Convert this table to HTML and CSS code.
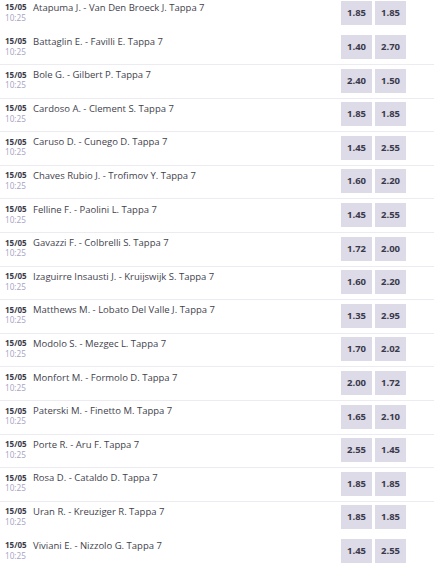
FILE: index.html
```html
<!DOCTYPE html>
<html lang="it">

<head>
    <meta charset="UTF-8">
    <meta name="viewport" content="width=device-width, initial-scale=1.0">
    <title>Tappa 7 - Testa a testa</title>
    <link rel="stylesheet" href="styles.css">
</head>

<body>
    <div class="list">
        <div class="row plain">
            <div class="when"><b>15/05</b><span>10:25</span></div>
            <div class="event">Atapuma J. - Van Den Broeck J. Tappa 7</div>
            <div class="odds"><span>1.85</span><span>1.85</span></div>
        </div>
        <div class="row">
            <div class="when"><b>15/05</b><span>10:25</span></div>
            <div class="event">Battaglin E. - Favilli E. Tappa 7</div>
            <div class="odds"><span>1.40</span><span>2.70</span></div>
        </div>
        <div class="row">
            <div class="when"><b>15/05</b><span>10:25</span></div>
            <div class="event">Bole G. - Gilbert P. Tappa 7</div>
            <div class="odds"><span>2.40</span><span>1.50</span></div>
        </div>
        <div class="row">
            <div class="when"><b>15/05</b><span>10:25</span></div>
            <div class="event">Cardoso A. - Clement S. Tappa 7</div>
            <div class="odds"><span>1.85</span><span>1.85</span></div>
        </div>
        <div class="row">
            <div class="when"><b>15/05</b><span>10:25</span></div>
            <div class="event">Caruso D. - Cunego D. Tappa 7</div>
            <div class="odds"><span>1.45</span><span>2.55</span></div>
        </div>
        <div class="row">
            <div class="when"><b>15/05</b><span>10:25</span></div>
            <div class="event">Chaves Rubio J. - Trofimov Y. Tappa 7</div>
            <div class="odds"><span>1.60</span><span>2.20</span></div>
        </div>
        <div class="row">
            <div class="when"><b>15/05</b><span>10:25</span></div>
            <div class="event">Felline F. - Paolini L. Tappa 7</div>
            <div class="odds"><span>1.45</span><span>2.55</span></div>
        </div>
        <div class="row">
            <div class="when"><b>15/05</b><span>10:25</span></div>
            <div class="event">Gavazzi F. - Colbrelli S. Tappa 7</div>
            <div class="odds"><span>1.72</span><span>2.00</span></div>
        </div>
        <div class="row">
            <div class="when"><b>15/05</b><span>10:25</span></div>
            <div class="event">Izaguirre Insausti J. - Kruijswijk S. Tappa 7</div>
            <div class="odds"><span>1.60</span><span>2.20</span></div>
        </div>
        <div class="row">
            <div class="when"><b>15/05</b><span>10:25</span></div>
            <div class="event">Matthews M. - Lobato Del Valle J. Tappa 7</div>
            <div class="odds"><span>1.35</span><span>2.95</span></div>
        </div>
        <div class="row">
            <div class="when"><b>15/05</b><span>10:25</span></div>
            <div class="event">Modolo S. - Mezgec L. Tappa 7</div>
            <div class="odds"><span>1.70</span><span>2.02</span></div>
        </div>
        <div class="row">
            <div class="when"><b>15/05</b><span>10:25</span></div>
            <div class="event">Monfort M. - Formolo D. Tappa 7</div>
            <div class="odds"><span>2.00</span><span>1.72</span></div>
        </div>
        <div class="row">
            <div class="when"><b>15/05</b><span>10:25</span></div>
            <div class="event">Paterski M. - Finetto M. Tappa 7</div>
            <div class="odds"><span>1.65</span><span>2.10</span></div>
        </div>
        <div class="row">
            <div class="when"><b>15/05</b><span>10:25</span></div>
            <div class="event">Porte R. - Aru F. Tappa 7</div>
            <div class="odds"><span>2.55</span><span>1.45</span></div>
        </div>
        <div class="row">
            <div class="when"><b>15/05</b><span>10:25</span></div>
            <div class="event">Rosa D. - Cataldo D. Tappa 7</div>
            <div class="odds"><span>1.85</span><span>1.85</span></div>
        </div>
        <div class="row plain">
            <div class="when"><b>15/05</b><span>10:25</span></div>
            <div class="event">Uran R. - Kreuziger R. Tappa 7</div>
            <div class="odds"><span>1.85</span><span>1.85</span></div>
        </div>
        <div class="row plain">
            <div class="when"><b>15/05</b><span>10:25</span></div>
            <div class="event">Viviani E. - Nizzolo G. Tappa 7</div>
            <div class="odds"><span>1.45</span><span>2.55</span></div>
        </div>
    </div>
</body>

</html>
```

FILE: styles.css
```css
html {
    height: 100%;
}

body {
    margin: 0;
    padding: 0;
    font-family: "Open Sans", "Liberation Sans", sans-serif;
    background: #fff;
    color: #3a3a48;
    overflow: hidden;
}

.list {
    margin-top: -2.2px;
}

.row {
    display: flex;
    align-items: flex-start;
    height: 33.6px;
    box-sizing: border-box;
    border-bottom: 1px solid #ebebf1;
}

.row.plain {
    border-bottom-color: transparent;
}

.when {
    display: flex;
    flex-direction: column;
    width: 28px;
    padding: 3.6px 0 0 5px;
    flex-shrink: 0;
}

.when b {
    font-size: 8px;
    line-height: 11px;
    font-weight: 700;
    color: #3a3a48;
}

.when span {
    font-size: 8.2px;
    line-height: 11.2px;
    margin-top: -0.4px;
    color: #a6a1c2;
}

.event {
    flex: 1;
    padding-top: 3.3px;
    font-size: 9.5px;
    line-height: 13px;
    color: #3f3f4d;
    white-space: nowrap;
}

.odds {
    display: flex;
    gap: 3px;
    margin-right: 28px;
    padding-top: 3.6px;
}

.odds span {
    width: 31px;
    height: 24px;
    line-height: 24px;
    text-align: center;
    background: #dddbe7;
    font-size: 9.5px;
    font-weight: 700;
    color: #3a3a4c;
}
```
